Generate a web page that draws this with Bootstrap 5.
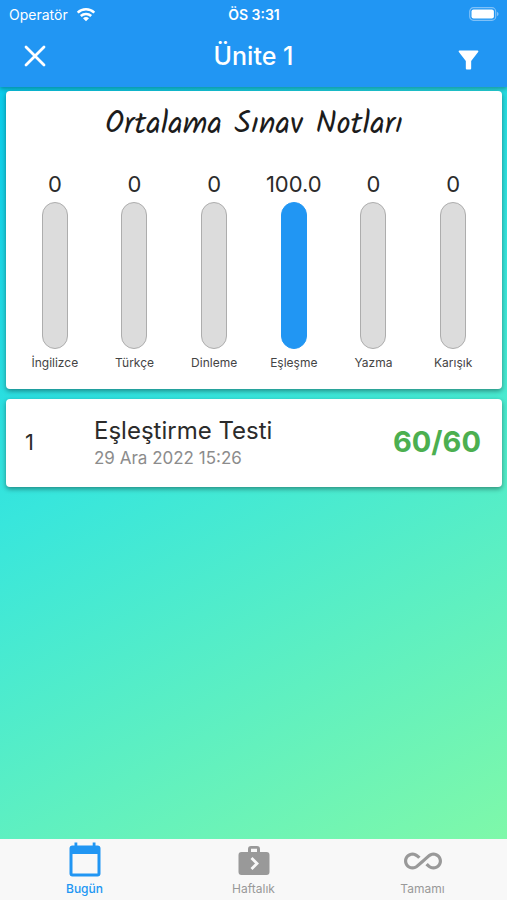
<!DOCTYPE html>
<html lang="tr">
<head>
<meta charset="utf-8">
<meta name="viewport" content="width=device-width, initial-scale=1">
<title>Ünite 1</title>
<link href="https://cdn.jsdelivr.net/npm/bootstrap@5.3.0/dist/css/bootstrap.min.css" rel="stylesheet">
<style>
  body { font-family: Inter, "Liberation Sans", sans-serif; color: #2b2b2b; background: #f8f8f8; }
  .app-screen { background: linear-gradient(152deg, #00c6ee 0%, #38e6dc 45%, #86faa4 100%); }
  .app-header { background: #2196f3; box-shadow: 0 2px 4px rgba(0, 0, 0, .3); }
  .status-row { height: 28px; font-size: 14px; padding: 0 8px 0 9px; }
  .title-row { height: 59px; padding: 0 20px; }
  .title-row h1 { font-size: 25px; line-height: 56px; }
  .icon-button { width: 30px; height: 56px; color: #fff; background: none; border: 0; padding: 0; }
  .content-area { padding: 4px 5px 0 6px; gap: 10px; }
  .sheet { border: 0; border-radius: 4px; box-shadow: 0 2px 5px rgba(0, 0, 0, .4); }
  .chart-sheet { padding: 12px 9px 18px; }
  .chart-sheet h2 { font-family: Kalam, Lato, sans-serif; font-size: 31px; line-height: 44px; margin-bottom: 23px; color: #1c1c1c; }
  .score-value { font-size: 22px; line-height: 28px; }
  .score-bar { width: 26px; height: 147px; margin: 4px 0 6px; border-radius: 13px; background: #dcdcdc; border: 1px solid #adadad; }
  .score-bar.filled { background: #2196f3; border-color: #2196f3; }
  .score-label { font-size: 12px; line-height: 16px; color: #444; }
  .test-row { min-height: 88px; padding: 14px 21px 16px 19px; }
  .test-index { width: 69px; font-size: 22px; }
  .test-name { font-size: 24px; line-height: 32px; }
  .test-date { font-size: 17px; line-height: 22px; color: #8c8c8c; }
  .test-score { font-size: 29px; color: #4caf50; }
  .tab-bar { background: #f8f8f8; height: 61px; }
  .tab-bar a { font-size: 12px; line-height: 16px; color: #999; padding-top: 2px; }
  .tab-bar a.active { color: #2196f3; }
  svg { display: block; }
</style>
<script src="https://cdn.jsdelivr.net/npm/bootstrap@5.3.0/dist/js/bootstrap.bundle.min.js"></script>
</head>
<body>
<div class="app-screen d-flex flex-column min-vh-100">
  <header class="app-header text-white">
    <div class="status-row row g-0 align-items-center">
      <div class="col d-flex align-items-center gap-2">
        <span>Operatör</span>
        <svg width="20" height="15" viewBox="0 0 20 15" fill="none" stroke="currentColor" stroke-width="2.5" aria-hidden="true"><path d="M1.7 5.7a12 12 0 0 1 16.6 0M4.8 9a7.6 7.6 0 0 1 10.4 0"/><path d="M10 14.2 7 11.3a4.4 4.4 0 0 1 6 0z" fill="currentColor" stroke="none"/></svg>
      </div>
      <div class="col-auto fw-semibold">ÖS 3:31</div>
      <div class="col d-flex justify-content-end">
        <svg width="30" height="14" viewBox="0 0 30 14" aria-hidden="true"><rect x=".7" y=".7" width="26" height="12.6" rx="3.8" fill="none" stroke="#7fc1f8" stroke-width="1.2"/><rect x="2.5" y="2.5" width="22.4" height="9" rx="2" fill="#fff"/><path d="M28 5c2 .6 2 3.400 0 4z" fill="#7fc1f8"/></svg>
      </div>
    </div>
    <div class="title-row d-flex justify-content-between align-items-start">
      <button class="icon-button" type="button" aria-label="Kapat"><svg class="mx-auto" width="22" height="22" viewBox="0 0 22 22" stroke="currentColor" stroke-width="2.800" stroke-linecap="round"><path d="M2 2l18 18M20 2 2 20"/></svg></button>
      <h1 class="m-0 fw-medium">Ünite 1</h1>
      <button class="icon-button pt-2 pe-2" type="button" aria-label="Filtrele"><svg class="ms-auto" width="21" height="20" viewBox="0 0 22 20" fill="currentColor"><path d="M1.500 0h19q1.500.3.600 1.700L13.800 11v8q0 1-1 1H9.200q-1 0-1-1v-8L.9 1.700Q0 .3 1.500 0z"/></svg></button>
    </div>
  </header>

  <main class="content-area flex-grow-1 d-flex flex-column">
    <section class="sheet chart-sheet card">
      <h2 class="text-center fw-normal">Ortalama Sınav Notları</h2>
      <div class="row row-cols-6 g-0 text-center">
        <div class="col d-flex flex-column align-items-center"><div class="score-value">0</div><div class="score-bar"></div><div class="score-label">İngilizce</div></div>
        <div class="col d-flex flex-column align-items-center"><div class="score-value">0</div><div class="score-bar"></div><div class="score-label">Türkçe</div></div>
        <div class="col d-flex flex-column align-items-center"><div class="score-value">0</div><div class="score-bar"></div><div class="score-label">Dinleme</div></div>
        <div class="col d-flex flex-column align-items-center"><div class="score-value">100.0</div><div class="score-bar filled"></div><div class="score-label">Eşleşme</div></div>
        <div class="col d-flex flex-column align-items-center"><div class="score-value">0</div><div class="score-bar"></div><div class="score-label">Yazma</div></div>
        <div class="col d-flex flex-column align-items-center"><div class="score-value">0</div><div class="score-bar"></div><div class="score-label">Karışık</div></div>
      </div>
    </section>
    <section class="sheet test-row card flex-row align-items-center">
      <div class="test-index">1</div>
      <div class="flex-grow-1">
        <div class="test-name">Eşleştirme Testi</div>
        <div class="test-date">29 Ara 2022 15:26</div>
      </div>
      <div class="test-score fw-bold">60/60</div>
    </section>
  </main>

  <nav class="tab-bar row row-cols-3 g-0 text-center">
    <a href="#bugun" class="col active d-flex flex-column align-items-center text-decoration-none fw-medium" aria-current="page">
      <svg width="40" height="40" viewBox="0 0 40 40" fill="currentColor" aria-hidden="true"><path fill-rule="evenodd" d="M9.500 1.500h2.800v3h15.400v-3h2.800v3h2q3 0 3 3v25q0 3-3 3h-25q-3 0-3-3v-25q0-3 3-3h2zM7.500 13v19.500h25V13z"/></svg>
      Bugün</a>
    <a href="#haftalik" class="col d-flex flex-column align-items-center text-decoration-none">
      <svg width="40" height="40" viewBox="0 0 40 40" aria-hidden="true"><path fill="currentColor" fill-rule="evenodd" d="M17 5h6q3 0 3 3v3h6.500q3 0 3 3v17q0 3-3 3h-25q-3 0-3-3V14q0-3 3-3H14V8q0-3 3-3zm0 2.800V11h6V7.800z"/><path d="M17.500 17 23 22.500l-5.500 5.500" fill="none" stroke="#f8f8f8" stroke-width="2.800"/></svg>
      Haftalık</a>
    <a href="#tamami" class="col d-flex flex-column align-items-center text-decoration-none">
      <svg width="38" height="40" viewBox="0 0 24 24" fill="currentColor" aria-hidden="true"><path d="M18.600 6.620c-1.440 0-2.800.56-3.770 1.530L12 10.660 10.480 12h.01L7.800 14.390c-.64.64-1.490.99-2.400.99-1.870 0-3.390-1.510-3.390-3.380S3.530 8.620 5.400 8.620c.91 0 1.760.35 2.440 1.030l1.130 1 1.510-1.340L9.220 8.200C8.200 7.180 6.840 6.620 5.400 6.620 2.420 6.620 0 9.040 0 12s2.420 5.380 5.400 5.380c1.440 0 2.800-.56 3.770-1.530l2.830-2.500.01.01L13.520 12h-.01l2.690-2.390c.64-.64 1.490-.99 2.400-.99 1.870 0 3.390 1.510 3.390 3.380s-1.520 3.380-3.390 3.380c-.9 0-1.760-.35-2.440-1.030l-1.140-1.010-1.510 1.340 1.270 1.120c1.020 1.010 2.370 1.570 3.820 1.570 2.980 0 5.400-2.410 5.400-5.380s-2.420-5.370-5.400-5.370z"/></svg>
      Tamamı</a>
  </nav>
</div>
</body>
</html>
